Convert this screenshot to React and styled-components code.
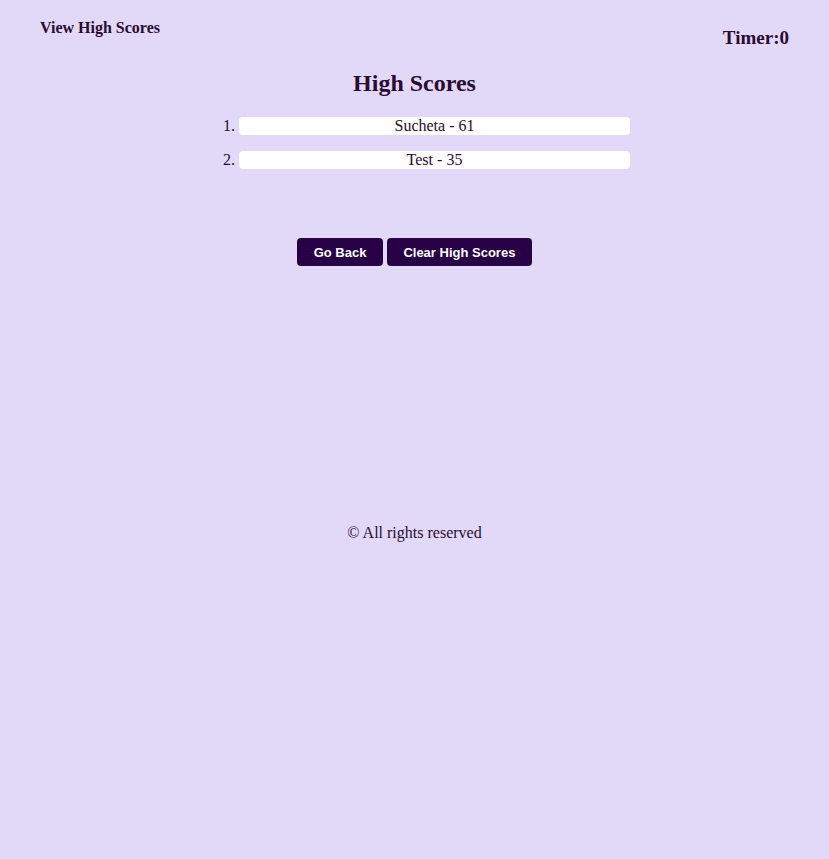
import React from "react";
import styled, { createGlobalStyle } from "styled-components";

const Global = createGlobalStyle`
  html, body { margin: 0; padding: 0; background: #e2d9f8; }
  body { font-family: "Liberation Serif", "Times New Roman", serif; color: #2a0b33; min-height: 100vh; }
`;

const Page = styled.div`
  display: flex;
  flex-direction: column;
  align-items: center;
  width: 100%;
`;

const Header = styled.header`
  display: flex;
  justify-content: space-between;
  align-items: flex-start;
  box-sizing: border-box;
  width: 100%;
  height: 50px;
  padding: 19px 40px 0;
`;

const HeaderLink = styled.a`
  font-size: 16px;
  font-weight: bold;
  line-height: 18px;
  color: #2a0b33;
  text-decoration: none;
  cursor: pointer;
`;

const Timer = styled.div`
  font-size: 19px;
  font-weight: bold;
  line-height: 22px;
  margin-top: 8px;
`;

const Title = styled.h1`
  margin: 19px 0 0;
  font-size: 24px;
  line-height: 28px;
  font-weight: bold;
  text-align: center;
`;

const List = styled.ol`
  display: flex;
  flex-direction: column;
  gap: 16px;
  width: 391px;
  margin: 20px 0 0;
  padding: 0 0 0 40px;
  font-size: 16px;
`;

const Item = styled.li`
  background: #ffffff;
  border-radius: 4px;
  height: 18px;
  line-height: 18px;
  text-align: center;
`;

const Buttons = styled.div`
  display: flex;
  gap: 4px;
  margin-top: 69px;
`;

const Button = styled.button`
  font-family: "Liberation Sans", Arial, sans-serif;
  font-size: 13px;
  font-weight: bold;
  color: #ffffff;
  background: #270045;
  border: none;
  border-radius: 4px;
  height: 28px;
  padding: 0 16.5px;
  cursor: pointer;
`;

const Footer = styled.footer`
  margin-top: 258px;
  font-size: 16px;
  line-height: 18px;
  text-align: center;
`;

export default function App() {
  const scores = [
    { name: "Sucheta", score: 61 },
    { name: "Test", score: 35 },
  ];
  return (
    <>
      <Global />
      <Page>
        <Header>
          <HeaderLink>View High Scores</HeaderLink>
          <Timer>Timer:0</Timer>
        </Header>
        <Title>High Scores</Title>
        <List>
          {scores.map((s) => (
            <Item key={s.name}>
              {s.name} - {s.score}
            </Item>
          ))}
        </List>
        <Buttons>
          <Button>Go Back</Button>
          <Button>Clear High Scores</Button>
        </Buttons>
        <Footer>© All rights reserved</Footer>
      </Page>
    </>
  );
}
